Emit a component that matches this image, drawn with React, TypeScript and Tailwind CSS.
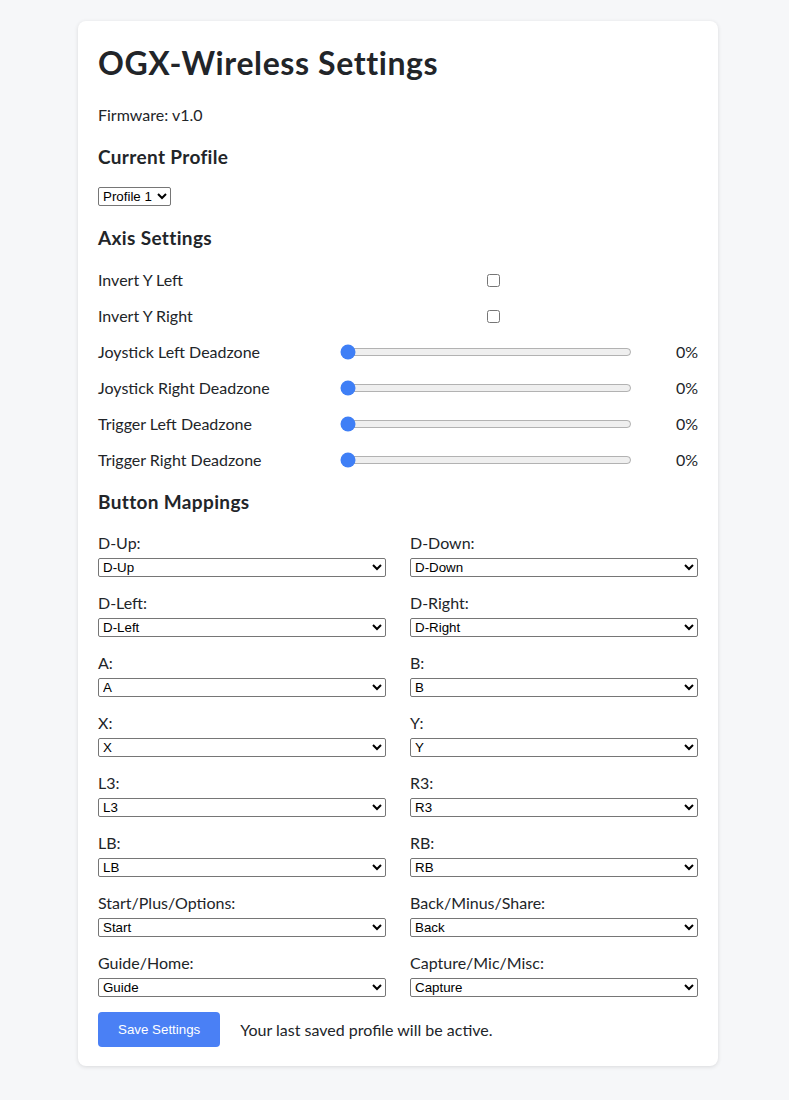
import { memo } from 'react';

/**
 * Axis row: either a checkbox toggle or a deadzone slider.
 */
interface AxisRow {
  label: string;
  kind: 'check' | 'range';
}

const AXIS_ROWS: AxisRow[] = [
  { label: 'Invert Y Left', kind: 'check' },
  { label: 'Invert Y Right', kind: 'check' },
  { label: 'Joystick Left Deadzone', kind: 'range' },
  { label: 'Joystick Right Deadzone', kind: 'range' },
  { label: 'Trigger Left Deadzone', kind: 'range' },
  { label: 'Trigger Right Deadzone', kind: 'range' },
];

const MAPPINGS: { label: string; value: string }[] = [
  { label: 'D-Up:', value: 'D-Up' },
  { label: 'D-Down:', value: 'D-Down' },
  { label: 'D-Left:', value: 'D-Left' },
  { label: 'D-Right:', value: 'D-Right' },
  { label: 'A:', value: 'A' },
  { label: 'B:', value: 'B' },
  { label: 'X:', value: 'X' },
  { label: 'Y:', value: 'Y' },
  { label: 'L3:', value: 'L3' },
  { label: 'R3:', value: 'R3' },
  { label: 'LB:', value: 'LB' },
  { label: 'RB:', value: 'RB' },
  { label: 'Start/Plus/Options:', value: 'Start' },
  { label: 'Back/Minus/Share:', value: 'Back' },
  { label: 'Guide/Home:', value: 'Guide' },
  { label: 'Capture/Mic/Misc:', value: 'Capture' },
];

const OPTIONS = [
  'D-Up', 'D-Down', 'D-Left', 'D-Right', 'A', 'B', 'X', 'Y', 'L3', 'R3', 'LB', 'RB',
  'Start', 'Back', 'Guide', 'Capture',
];

const selectCls =
  "h-[19px] bg-white border border-[#767676] rounded-[2px] text-[13.33px] leading-[15px] text-black pl-0 font-['Liberation_Sans',Arial,sans-serif]";

const headingCls = 'text-[19px] leading-[22px] font-bold tracking-[0.35px]';

const App: React.FC = memo(() => {
  return (
    <div className="min-h-[1100px] bg-[#f6f7f9] pt-[21px] font-['Lato',sans-serif] text-[#222529]">
      <div className="ml-[78px] w-[640px] bg-white rounded-lg shadow-[0_1px_4px_rgba(0,0,0,0.12)] px-5 pt-[23px] pb-[19px]">
        <h1 className="text-[32px] leading-[38px] font-bold tracking-[0.6px]">OGX-Wireless Settings</h1>
        <p className="mt-[21px] text-base leading-6">Firmware: v1.0</p>

        <h2 className={`mt-[19px] ${headingCls}`}>Current Profile</h2>
        <div className="mt-[19px] flex">
          <select defaultValue="1" className={`${selectCls} w-[73px]`}>
            <option value="1">Profile 1</option>
            <option value="2">Profile 2</option>
            <option value="3">Profile 3</option>
            <option value="4">Profile 4</option>
          </select>
        </div>

        <h2 className={`mt-[21px] ${headingCls}`}>Axis Settings</h2>
        <div className="mt-[13px]">
          {AXIS_ROWS.map((row) => (
            <div key={row.label} className="flex items-center h-9">
              <span className="w-[242px] text-base">{row.label}</span>
              <div className="w-[306px] flex items-center">
                {row.kind === 'check' ? (
                  <div className="w-full flex justify-center">
                    <input type="checkbox" className="w-[13px] h-[13px]" />
                  </div>
                ) : (
                  <input
                    type="range"
                    min={0}
                    max={100}
                    defaultValue={0}
                    className="w-[292px] accent-[#3f7ff6]"
                  />
                )}
              </div>
              <span className="flex-1 text-right text-base">{row.kind === 'range' ? '0%' : ''}</span>
            </div>
          ))}
        </div>

        <h2 className={`mt-[13px] ${headingCls}`}>Button Mappings</h2>
        <div className="mt-[18px] grid grid-cols-2 gap-x-6 gap-y-[14px]">
          {MAPPINGS.map((m) => (
            <div key={m.label} className="flex flex-col">
              <label className="text-base leading-6">{m.label}</label>
              <select defaultValue={m.value} className={`${selectCls} mt-[3px] w-full`}>
                {OPTIONS.map((o) => (
                  <option key={o} value={o}>
                    {o}
                  </option>
                ))}
              </select>
            </div>
          ))}
        </div>

        <div className="mt-[15px] flex items-center gap-5">
          <button className="h-[35px] px-5 rounded bg-[#4a80f5] text-white text-[13.33px] font-['Liberation_Sans',Arial,sans-serif]">
            Save Settings
          </button>
          <span className="text-base">Your last saved profile will be active.</span>
        </div>
      </div>
    </div>
  );
});

App.displayName = 'App';

export default App;
